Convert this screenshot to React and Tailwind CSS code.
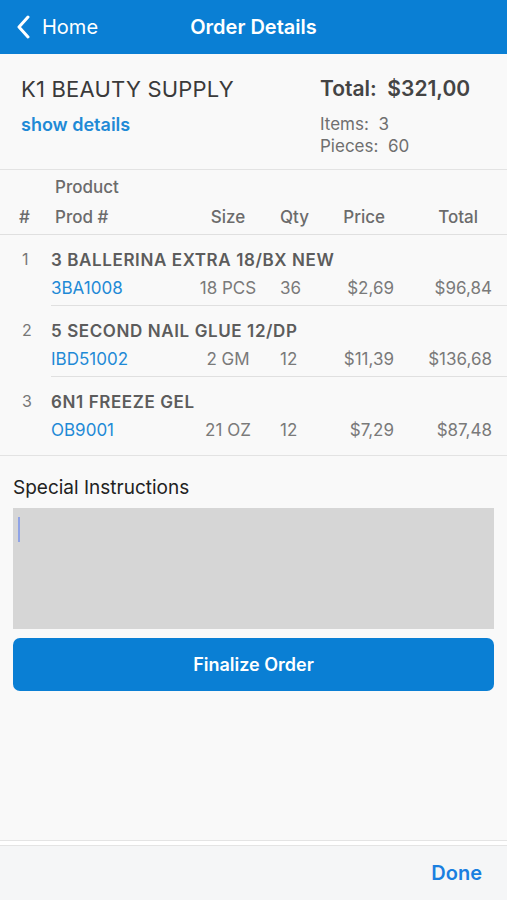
import React from "react";

const items = [
  { n: 1, name: "3 BALLERINA EXTRA 18/BX NEW", code: "3BA1008", size: "18 PCS", qty: "36", price: "$2,69", total: "$96,84" },
  { n: 2, name: "5 SECOND NAIL GLUE 12/DP", code: "IBD51002", size: "2 GM", qty: "12", price: "$11,39", total: "$136,68" },
  { n: 3, name: "6N1 FREEZE GEL", code: "OB9001", size: "21 OZ", qty: "12", price: "$7,29", total: "$87,48" },
];

const font = { fontFamily: "Inter, 'Liberation Sans', sans-serif" };

// one product line in the table
const ItemRow = ({ item, last }) => (
  <div className={"flex " + (last ? "pb-[8px]" : "")}>
    <div className="w-[51px] pl-[22px] pt-[12px] text-[16px] leading-[24px] text-[#777]">{item.n}</div>
    <div className={"flex-1 pr-[7px] " + (last ? "" : "border-b border-[#e0e0e0]")}>
      <div className="pt-[13px] text-[17px] leading-[24px] font-semibold text-[#5c5c5c] tracking-[0.6px]">{item.name}</div>
      <div className="mt-[4px] mb-[5px] flex text-[17px] leading-[24px] text-[#7a7a7a]">
        <span className="w-[142px] text-[#1f8ad6]">{item.code}</span>
        <span className="w-[70px] text-center">{item.size}</span>
        <span className="ml-[17px] w-[50px]">{item.qty}</span>
        <span className="w-[64px] text-right">{item.price}</span>
        <span className="w-[98px] text-right">{item.total}</span>
      </div>
    </div>
  </div>
);

export default function App() {
  return (
    <div className="h-[900px] w-[507px] flex flex-col bg-[#f9f9f9] overflow-hidden" style={font}>
      {/* nav bar */}
      <div className="h-[54px] bg-[#0a7fd4] flex items-center relative text-white">
        <svg className="ml-[16px]" width="16" height="24" viewBox="0 0 16 24" fill="none">
          <path d="M12 2 L3 12 L12 22" stroke="white" strokeWidth="3" strokeLinecap="round" strokeLinejoin="round" />
        </svg>
        <span className="ml-[10px] text-[20px]">Home</span>
        <span className="absolute left-0 right-0 text-center text-[20px] font-semibold pointer-events-none">Order Details</span>
      </div>

      <div className="flex-1">
        {/* customer + totals */}
        <div className="flex pl-[21px] pt-[20px] pb-[12px] border-b border-[#e3e3e3]">
          <div className="w-[299px]">
            <div className="text-[22px] leading-[30px] text-[#3a3a3a] tracking-[0.2px]">K1 BEAUTY SUPPLY</div>
            <div className="mt-[9px] text-[18px] leading-[24px] font-semibold text-[#1f8ad6]">show details</div>
          </div>
          <div>
            <div className="text-[21px] leading-[30px] font-semibold text-[#444]">Total:&nbsp; $321,00</div>
            <div className="mt-[9px] text-[17px] leading-[22px] text-[#6f6f6f]">Items:&nbsp; 3</div>
            <div className="text-[17px] leading-[22px] text-[#6f6f6f]">Pieces:&nbsp; 60</div>
          </div>
        </div>

        {/* table header */}
        <div className="pt-[5px] pb-[5px] border-b border-[#e0e0e0] text-[17px] leading-[24px] font-medium text-[#6b6b6b]">
          <div className="pl-[55px]">Product</div>
          <div className="mt-[6px] flex">
            <span className="w-[55px] pl-[19px]">#</span>
            <span className="w-[138px]">Prod #</span>
            <span className="w-[70px] text-center">Size</span>
            <span className="ml-[17px] w-[50px]">Qty</span>
            <span className="w-[64px] text-right pr-[9px]">Price</span>
            <span className="w-[98px] text-right pr-[14px]">Total</span>
          </div>
        </div>

        {items.map((it, i) => (
          <ItemRow key={it.n} item={it} last={i === items.length - 1} />
        ))}

        {/* instructions */}
        <div className="border-t border-[#e3e3e3] px-[13px] pt-[19px]">
          <div className="text-[19px] leading-[26px] text-[#222]">Special Instructions</div>
          <div className="mt-[7px] h-[121px] bg-[#d6d6d6] relative">
            <div className="absolute left-[5px] top-[9px] w-[2px] h-[25px] bg-[#8fa3e6]" />
          </div>
          <button className="mt-[9px] w-full h-[53px] rounded-[7px] bg-[#0a7fd4] text-white text-[18px] font-semibold">
            Finalize Order
          </button>
        </div>
      </div>

      {/* keyboard toolbar */}
      <div className="h-[5px] border-t border-[#e4e4e4] bg-white" />
      <div className="h-[55px] border-t border-[#e4e4e4] bg-[#f5f6f7] flex items-center justify-end pr-[25px]">
        <span className="text-[20px] font-semibold text-[#1a7fe0]">Done</span>
      </div>
    </div>
  );
}
